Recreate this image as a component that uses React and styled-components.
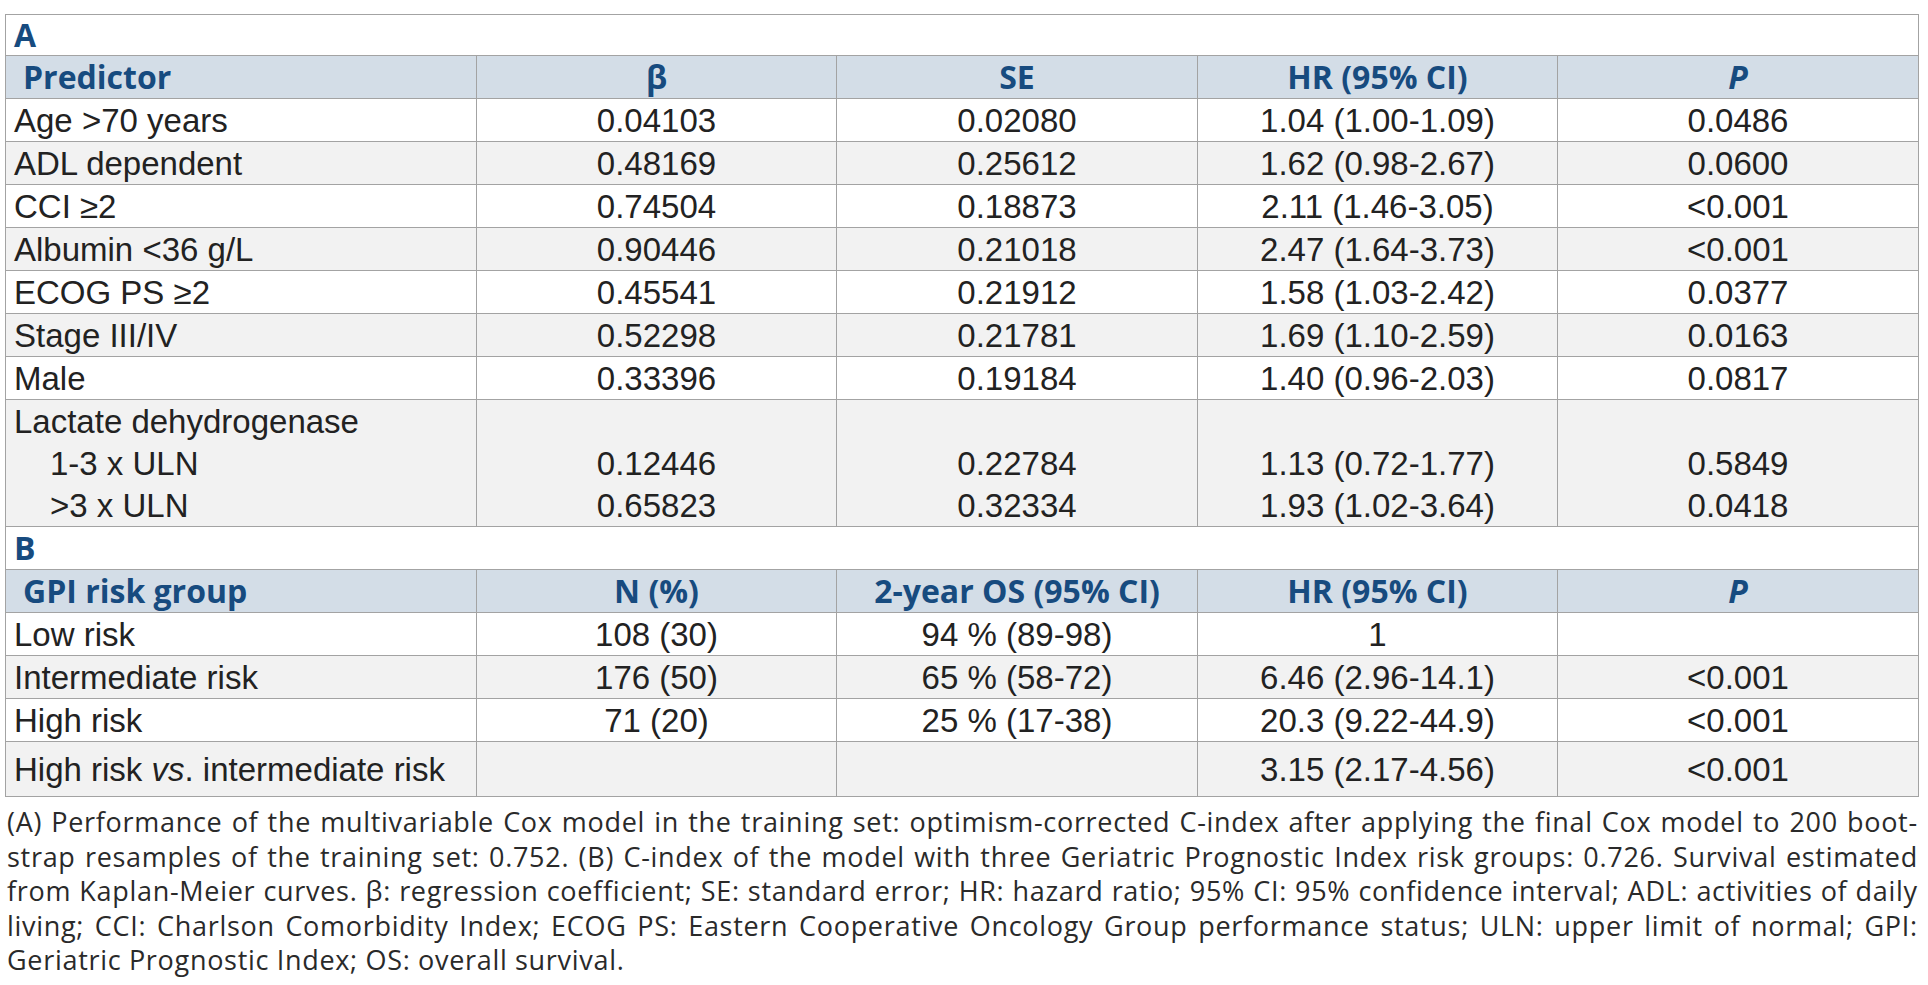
import React from 'react';
import styled, { createGlobalStyle } from 'styled-components';

/* ---------- Global ---------- */

const GlobalStyle = createGlobalStyle`
  html, body {
    margin: 0;
    padding: 0;
    background: #ffffff;
  }
`;

/* ---------- Styled Components ---------- */

const Page = styled.div`
  padding: 14px 10px 0 5px;
  width: 1913px;
`;

const Table = styled.table`
  width: 1913px;
  table-layout: fixed;
  border-collapse: collapse;
  border: 1px solid #a3a3a3;
  font-family: 'Liberation Sans', Arial, sans-serif;
  font-size: 33px;
  color: #222222;
`;

const TitleCell = styled.td`
  height: ${p => (p.$first ? '40px' : '42px')};
  padding: 0 8px;
  border: 1px solid #a3a3a3;
  background: #ffffff;
  font-family: 'Open Sans', sans-serif;
  font-weight: 700;
  font-size: 32px;
  line-height: 1;
  color: #174b7f;
  vertical-align: middle;
`;

const HeadCell = styled.th`
  height: 42px;
  padding: ${p => (p.$left ? '0 0 0 17px' : '0')};
  border: 1px solid #a3a3a3;
  background: #d3dde7;
  font-family: 'Open Sans', sans-serif;
  font-weight: 700;
  font-size: 32px;
  font-style: ${p => (p.$italic ? 'italic' : 'normal')};
  line-height: 1;
  color: #174b7f;
  text-align: ${p => (p.$left ? 'left' : 'center')};
  vertical-align: middle;
  white-space: nowrap;
`;

const Row = styled.tr`
  background: ${p => (p.$shade ? '#f2f2f2' : '#ffffff')};
`;

const Cell = styled.td`
  height: ${p => (p.$tall ? '54px' : '42px')};
  padding: ${p => (p.$indent ? '0 0 0 44px' : p.$left ? '0 0 0 8px' : '0')};
  border-left: 1px solid #a3a3a3;
  border-right: 1px solid #a3a3a3;
  border-top: ${p => (p.$joinTop ? 'none' : '1px solid #a3a3a3')};
  border-bottom: ${p => (p.$joinBottom ? 'none' : '1px solid #a3a3a3')};
  line-height: 1;
  text-align: ${p => (p.$left || p.$indent ? 'left' : 'center')};
  vertical-align: middle;
  white-space: nowrap;
`;

const Caption = styled.div`
  margin: 8px 0 0 2px;
  width: 1911px;
  font-family: 'Open Sans', 'Noto Sans', sans-serif;
  font-size: 27px;
  line-height: 34.5px;
  letter-spacing: 0.7px;
  color: #2a2a2a;
`;

const CaptionLine = styled.div`
  display: flex;
  justify-content: ${p => (p.$last ? 'flex-start' : 'space-between')};
  gap: ${p => (p.$last ? '0.28em' : '0')};
  white-space: nowrap;
`;

/* ---------- Data ---------- */

const predictors = [
  ['Age >70 years', '0.04103', '0.02080', '1.04 (1.00-1.09)', '0.0486'],
  ['ADL dependent', '0.48169', '0.25612', '1.62 (0.98-2.67)', '0.0600'],
  ['CCI ≥2', '0.74504', '0.18873', '2.11 (1.46-3.05)', '<0.001'],
  ['Albumin <36 g/L', '0.90446', '0.21018', '2.47 (1.64-3.73)', '<0.001'],
  ['ECOG PS ≥2', '0.45541', '0.21912', '1.58 (1.03-2.42)', '0.0377'],
  ['Stage III/IV', '0.52298', '0.21781', '1.69 (1.10-2.59)', '0.0163'],
  ['Male', '0.33396', '0.19184', '1.40 (0.96-2.03)', '0.0817'],
];

const ldh = [
  ['1-3 x ULN', '0.12446', '0.22784', '1.13 (0.72-1.77)', '0.5849'],
  ['>3 x ULN', '0.65823', '0.32334', '1.93 (1.02-3.64)', '0.0418'],
];

const groups = [
  ['Low risk', '108 (30)', '94 % (89-98)', '1', ''],
  ['Intermediate risk', '176 (50)', '65 % (58-72)', '6.46 (2.96-14.1)', '<0.001'],
  ['High risk', '71 (20)', '25 % (17-38)', '20.3 (9.22-44.9)', '<0.001'],
];

const captionLines = [
  '(A) Performance of the multivariable Cox model in the training set: optimism-corrected C-index after applying the final Cox model to 200 boot-',
  'strap resamples of the training set: 0.752. (B) C-index of the model with three Geriatric Prognostic Index risk groups: 0.726. Survival estimated',
  'from Kaplan-Meier curves. β: regression coefficient; SE: standard error; HR: hazard ratio; 95% CI: 95% confidence interval; ADL: activities of daily',
  'living;  CCI: Charlson Comorbidity Index; ECOG PS: Eastern Cooperative Oncology Group performance status; ULN: upper limit of normal; GPI:',
  'Geriatric Prognostic Index; OS: overall survival.',
];

/* ---------- Component ---------- */

function ValueCells({ values, joinTop, joinBottom, tall }) {
  return values.map((v, i) => (
    <Cell key={i} $joinTop={joinTop} $joinBottom={joinBottom} $tall={tall}>
      {v}
    </Cell>
  ));
}

function App() {
  return (
    <Page>
      <GlobalStyle />
      <Table>
        <colgroup>
          <col style={{ width: '471px' }} />
          <col style={{ width: '360px' }} />
          <col style={{ width: '361px' }} />
          <col style={{ width: '360px' }} />
          <col style={{ width: '361px' }} />
        </colgroup>
        <tbody>
          <tr>
            <TitleCell colSpan={5} $first>A</TitleCell>
          </tr>
          <tr>
            <HeadCell $left>Predictor</HeadCell>
            <HeadCell>β</HeadCell>
            <HeadCell>SE</HeadCell>
            <HeadCell>HR (95% CI)</HeadCell>
            <HeadCell $italic>P</HeadCell>
          </tr>
          {predictors.map(([label, ...values], i) => (
            <Row key={label} $shade={i % 2 === 1}>
              <Cell $left>{label}</Cell>
              <ValueCells values={values} />
            </Row>
          ))}
          <Row $shade>
            <Cell $left $joinBottom>Lactate dehydrogenase</Cell>
            <ValueCells values={['', '', '', '']} joinBottom />
          </Row>
          {ldh.map(([label, ...values], i) => (
            <Row key={label} $shade>
              <Cell $indent $joinTop $joinBottom={i === 0}>{label}</Cell>
              <ValueCells values={values} joinTop joinBottom={i === 0} />
            </Row>
          ))}
          <tr>
            <TitleCell colSpan={5}>B</TitleCell>
          </tr>
          <tr>
            <HeadCell $left>GPI risk group</HeadCell>
            <HeadCell>N (%)</HeadCell>
            <HeadCell>2-year OS (95% CI)</HeadCell>
            <HeadCell>HR (95% CI)</HeadCell>
            <HeadCell $italic>P</HeadCell>
          </tr>
          {groups.map(([label, ...values], i) => (
            <Row key={label} $shade={i % 2 === 1}>
              <Cell $left>{label}</Cell>
              <ValueCells values={values} />
            </Row>
          ))}
          <Row $shade>
            <Cell $left $tall>
              High risk <i>vs</i>. intermediate risk
            </Cell>
            <ValueCells values={['', '', '3.15 (2.17-4.56)', '<0.001']} tall />
          </Row>
        </tbody>
      </Table>

      <Caption>
        {captionLines.map((line, i) => (
          <CaptionLine key={i} $last={i === captionLines.length - 1}>
            {line.split(/ +/).map((word, j) => (
              <span key={j}>{word}</span>
            ))}
          </CaptionLine>
        ))}
      </Caption>
    </Page>
  );
}

export default App;
